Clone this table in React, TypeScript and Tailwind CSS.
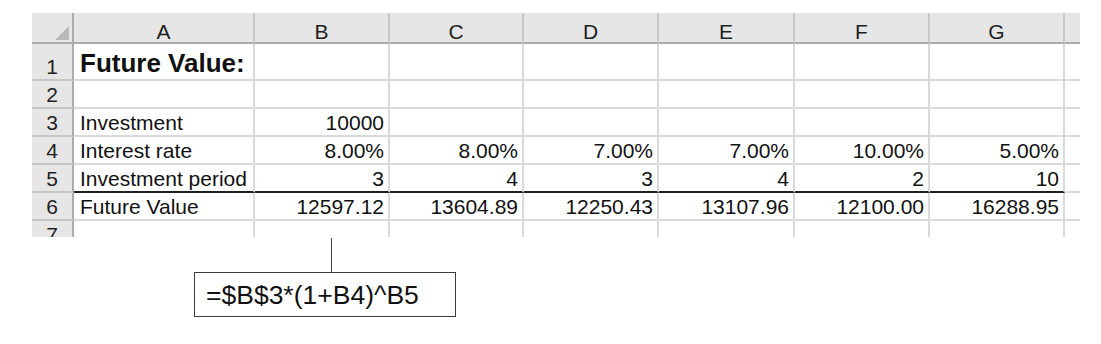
import * as React from "react";

const columns = ["A", "B", "C", "D", "E", "F", "G"];

type Row = {
  num: string;
  label?: string;
  values: string[];
  height: string;
  title?: boolean;
  underline?: boolean;
};

const rows: Row[] = [
  { num: "1", label: "Future Value:", values: [], height: "h-[37px]", title: true },
  { num: "2", values: [], height: "h-[28px]" },
  { num: "3", label: "Investment", values: ["10000"], height: "h-[28px]" },
  {
    num: "4",
    label: "Interest rate",
    values: ["8.00%", "8.00%", "7.00%", "7.00%", "10.00%", "5.00%"],
    height: "h-[28px]",
  },
  {
    num: "5",
    label: "Investment period",
    values: ["3", "4", "3", "4", "2", "10"],
    height: "h-[28px]",
    underline: true,
  },
  {
    num: "6",
    label: "Future Value",
    values: ["12597.12", "13604.89", "12250.43", "13107.96", "12100.00", "16288.95"],
    height: "h-[28px]",
  },
  { num: "7", values: [], height: "h-[28px]" },
];

function HeaderRow() {
  return (
    <>
      <div className="h-[31px] bg-[#e6e6e6] border-r-2 border-b-2 border-r-[#acacac] border-b-[#acacac] flex items-end justify-end pr-[3px] pb-[2px]">
        <svg width="14" height="14" viewBox="0 0 14 14">
          <polygon points="14,0 14,14 0,14" fill="#b8b8b8" />
        </svg>
      </div>
      {columns.map((c) => (
        <div
          key={c}
          className="h-[31px] bg-[#e6e6e6] border-r-2 border-b-2 border-r-[#c8c8c8] border-b-[#acacac] flex items-end justify-center text-[21px] leading-[21px] text-[#1f1f1f]"
        >
          {c}
        </div>
      ))}
      <div className="h-[31px] bg-[#e6e6e6] border-b-2 border-b-[#acacac]" />
    </>
  );
}

function DataRow({ row }: { row: Row }) {
  const cellBorder = row.underline
    ? "border-r-2 border-b-2 border-r-[#dadada] border-b-[#1f1f1f]"
    : "border-r-2 border-b-2 border-[#dadada]";

  return (
    <>
      <div
        className={`${row.height} bg-[#e6e6e6] border-r-2 border-b-2 border-r-[#acacac] border-b-[#c6c6c6] flex items-end justify-center text-[21px] leading-[24px] text-[#1f1f1f]`}
      >
        {row.num}
      </div>
      <div className={`${row.height} ${cellBorder} flex items-end pl-[6px] overflow-hidden whitespace-nowrap`}>
        {row.title ? (
          <span className="text-[26px] leading-[30px] font-bold pb-[1px]">{row.label}</span>
        ) : (
          <span className="text-[21px] leading-[24px]">{row.label}</span>
        )}
      </div>
      {columns.slice(1).map((c, i) => (
        <div
          key={c}
          className={`${row.height} ${cellBorder} flex items-end justify-end pr-[4px] text-[21px] leading-[24px]`}
        >
          {row.values[i]}
        </div>
      ))}
      <div className={`${row.height} border-b-2 border-[#dadada]`} />
    </>
  );
}

export default function App() {
  return (
    <div className="w-[1101px] h-[344px] bg-white text-[#111] font-['Liberation_Sans',Arial,sans-serif] pt-[13px] pl-[32px]">
      <div className="h-[224px] w-[1048px] overflow-hidden">
        <div className="grid grid-cols-[42px_181px_135px_134px_135px_136px_135px_135px_15px]">
          <HeaderRow />
          {rows.map((r) => (
            <DataRow key={r.num} row={r} />
          ))}
        </div>
      </div>

      {/* formula callout */}
      <div className="ml-[162px] w-[262px] pt-[1px]">
        <div className="ml-[137px] w-px h-[34px] bg-[#4a4a4a]" />
        <div className="h-[45px] border border-[#3c3c3c] flex items-center pl-[11px] text-[26.5px] leading-[30px] whitespace-nowrap">
          =$B$3*(1+B4)^B5
        </div>
      </div>
    </div>
  );
}
